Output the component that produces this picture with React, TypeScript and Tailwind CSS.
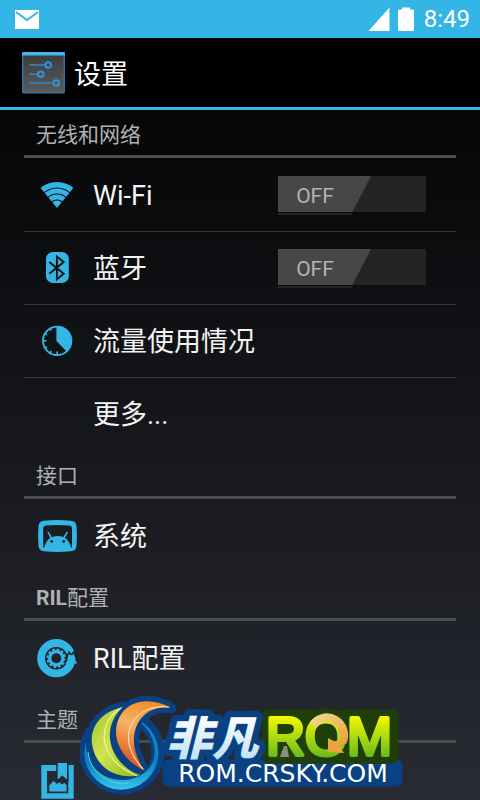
import React, { useState } from 'react';

interface SectionProps {
  title: React.ReactNode;
  first?: boolean;
  children: React.ReactNode;
}

interface RowProps {
  label?: string;
  ariaLabel?: string;
  icon?: React.ReactNode;
  control?: React.ReactNode;
}

const IconBox: React.FC<{ children?: React.ReactNode }> = ({ children }) => (
  <svg className="w-[42px] h-[42px] shrink-0" viewBox="0 1 42 42" fill="#33b5e5" aria-hidden="true">
    {children}
  </svg>
);

const WifiIcon = () => (
  <IconBox>
    <clipPath id="wifi-wedge"><path d="M21 35L-1 8V0H43V8Z" /></clipPath>
    <g clipPath="url(#wifi-wedge)" fill="none" stroke="#33b5e5">
      <circle cx="21" cy="35" r="23.3" strokeWidth="5.6" />
      <circle cx="21" cy="35" r="17" strokeWidth="5" />
      <circle cx="21" cy="35" r="11" strokeWidth="5" />
      <circle cx="21" cy="35" r="7.5" fill="#33b5e5" stroke="none" />
    </g>
  </IconBox>
);

const BluetoothIcon = () => (
  <IconBox>
    <rect x="10" y="6" width="22.8" height="31" rx="7" ry="6.5" />
    <path d="M13.3 16L27.7 27.7L20.9 33.2V10.6L27.7 16L13.3 27.7" fill="none" stroke="#0f1114" strokeWidth="1.9" />
  </IconBox>
);

const DataIcon = () => (
  <IconBox>
    <circle cx="21.2" cy="21.8" r="14.2" fill="none" stroke="#33b5e5" strokeWidth="1.8" />
    <path d="M20.4 7A15 15 0 0 1 31 33L20.4 22Z" />
    <path d="M6.5 21.8h4M21.2 36.5v-4M13.7 34.8l1.6-2.8M8.2 29.3l2.8-1.6M8.2 14.3l2.8 1.6M13.7 8.8l1.6 2.8" stroke="#33b5e5" strokeWidth="1.6" />
  </IconBox>
);

const SystemIcon = () => (
  <IconBox>
    <path
      fillRule="evenodd"
      d="M8 6.8Q21.5 5.2 35 6.8Q40 7.2 40.5 12Q41.4 22 40.5 32Q40 36.8 35 37.2Q21.5 38.8 8 37.2Q3 36.8 2.5 32Q1.6 22 2.5 12Q3 7.2 8 6.8ZM10 11.6Q7.4 11.8 7.2 14.5V33.5H36V14.5Q35.8 11.8 33 11.6Q21.5 10.4 10 11.6Z"
    />
    <path d="M8.3 34C9.5 26 15 22 21.7 22S33.8 26 35 34Z" />
    <path d="M12.2 18.4L15.5 24M31 18.4L27.8 24" stroke="#33b5e5" strokeWidth="1.6" strokeLinecap="round" />
    <circle cx="15.7" cy="27.4" r="1.4" fill="#1b1e23" />
    <circle cx="27.7" cy="27.4" r="1.4" fill="#1b1e23" />
  </IconBox>
);

const RilIcon = () => (
  <IconBox>
    <circle cx="20.3" cy="22.2" r="15.2" fill="none" stroke="#33b5e5" strokeWidth="7.8" />
    <circle cx="20.3" cy="22.2" r="6.6" fill="none" stroke="#33b5e5" strokeWidth="3.2" />
    <circle cx="20.3" cy="22.2" r="8.8" fill="none" stroke="#33b5e5" strokeWidth="2" strokeDasharray="2.8 1.81" />
    <path d="M29.2 25L33 16.2L35.3 19L37.6 16.2L42 26" fill="none" stroke="#1f2228" strokeWidth="1.5" />
    <path d="M35.3 18.5L41.5 27.5H38.5L36 33L29.5 27.5Z" />
  </IconBox>
);

const ThemeIcon = () => (
  <IconBox>
    <path fillRule="evenodd" d="M5.3 7H37.7V40.7H5.3ZM11 13V35.3H32.3V13Z" />
    <path d="M20.2 4H32.5V23.5L26.3 19.5L20.2 23.5Z" fill="#262930" />
    <path d="M21.7 5H31V21.6L26.3 17.5L21.7 21.6Z" />
    <path d="M13.3 33.4V27.5L17.6 23L20.8 26L23.2 24.2L26.2 26.4L28.5 24.8L30.6 27.5V33.4Z" />
  </IconBox>
);

const SettingsIcon = () => (
  <svg className="w-[43px] h-[43px] shrink-0" viewBox="0 0 43 43" fill="none" aria-hidden="true">
    <defs>
      <linearGradient id="panel" x1="0" y1="0" x2="0" y2="1">
        <stop offset="0" stopColor="#3b3b3c" />
        <stop offset="1" stopColor="#5b5b5c" />
      </linearGradient>
    </defs>
    <rect x="0.7" y="1.7" width="41.6" height="40.3" rx="1.2" fill="url(#panel)" stroke="#2e80bd" strokeWidth="1.2" />
    <path d="M0 4.5V2.4Q0 1 1.5 1H41.5Q43 1 43 2.4V4.5Z" fill="#3fb7ea" />
    <path d="M32 14h5M24 23.3h13" stroke="#2b5070" strokeWidth="1.4" />
    <path d="M7 14h16.5M7 23.3h9M7 32h24.5" stroke="#2f86c8" strokeWidth="1.4" />
    <g stroke="#3293d8" strokeWidth="2">
      <circle cx="26.2" cy="14" r="2.8" />
      <circle cx="18.8" cy="23.3" r="2.8" />
      <circle cx="34.2" cy="32" r="2.8" />
    </g>
  </svg>
);

const Switch: React.FC<{ label: string }> = ({ label }) => {
  const [on, setOn] = useState(false);
  return (
    <label className="relative block w-[148px] h-9 mr-[30px] mb-0.5 bg-[#232424] cursor-pointer">
      <input
        type="checkbox"
        className="sr-only"
        aria-label={label}
        checked={on}
        onChange={(e) => setOn(e.target.checked)}
      />
      <span className={`flex h-9 w-[93px] ${on ? 'ml-auto bg-[#33b5e5]' : 'bg-[#464747]'} [clip-path:polygon(0_0,100%_0,80%_100%,0_100%)]`}>
        <span className={`w-[74px] text-center text-[21px] leading-10 ${on ? 'text-white' : 'text-[#b4b4b4]'}`}>{on ? 'ON' : 'OFF'}</span>
      </span>
      <span className="absolute left-0 top-[37px] h-0.5 w-[74px] bg-[#242526]" />
    </label>
  );
};

const Section: React.FC<SectionProps> = ({ title, first, children }) => (
  <section>
    <h2 className={`h-12 px-3 border-b-3 border-[#4b4c50] text-[21px] leading-[51px] font-normal text-[#b0b1b3] ${first ? '' : 'mt-px'}`}>
      {title}
    </h2>
    <ul className="pt-px divide-y divide-[#34363a]">{children}</ul>
  </section>
);

const Row: React.FC<RowProps> = ({ label, ariaLabel, icon, control }) => (
  <li className="flex items-center">
    <button aria-label={ariaLabel} className="flex-1 h-[72px] pl-3 flex items-center gap-[15px] text-left text-[27px] leading-8 text-[#f3f3f3]">
      {icon || <IconBox />}
      <span className="pt-0.5">{label}</span>
    </button>
    {control}
  </li>
);

const StatusBar = () => (
  <div className="h-[38px] shrink-0 bg-[#33b5e5] flex items-center pl-[15px] pr-2.5 text-white">
    <svg className="w-6 h-[19px]" viewBox="0 0 24 19" aria-label="Mail">
      <rect width="24" height="19" fill="#fff" />
      <path d="M1 2L12 10L23 2" fill="none" stroke="#33b5e5" strokeWidth="2" />
    </svg>
    <svg className="ml-auto w-[22px] h-6" viewBox="0 0 22 24" fill="#fff" aria-label="Signal">
      <path d="M0.5 24L21.5 0.5V24Z" />
    </svg>
    <svg className="ml-2 w-4 h-6" viewBox="0 0 16 24" fill="#fff" aria-label="Battery">
      <path d="M4 0.5H12V2.5H14.5Q16 2.5 16 4V22.5Q16 24 14.5 24H1.5Q0 24 0 22.5V4Q0 2.5 1.5 2.5H4Z" />
    </svg>
    <span className="ml-2.5 text-2xl leading-[38px]">8:49</span>
  </div>
);

const RomLogo = () => (
  <svg className="absolute bottom-0 inset-x-0 mx-auto w-[336px] h-[110px] pointer-events-none" viewBox="72 690 336 110">
    <defs>
      <linearGradient id="leaf" x1="0" y1="0" x2="1" y2="1">
        <stop offset="0" stopColor="#9cc62e" />
        <stop offset="0.45" stopColor="#d3e350" />
        <stop offset="1" stopColor="#86b81c" />
      </linearGradient>
      <linearGradient id="flame" x1="0.6" y1="0" x2="0.3" y2="1">
        <stop offset="0" stopColor="#f28a2c" />
        <stop offset="0.4" stopColor="#f9b163" />
        <stop offset="1" stopColor="#d9480f" />
      </linearGradient>
      <linearGradient id="sea" x1="0" y1="0" x2="0" y2="1">
        <stop offset="0" stopColor="#1487c4" />
        <stop offset="0.6" stopColor="#0a82c2" />
        <stop offset="1" stopColor="#35c6ea" />
      </linearGradient>
      <linearGradient id="lime" x1="0" y1="716" x2="0" y2="757" gradientUnits="userSpaceOnUse">
        <stop offset="0" stopColor="#f6f900" />
        <stop offset="1" stopColor="#66bd1c" />
      </linearGradient>
      <linearGradient id="ice" x1="0" y1="716" x2="0" y2="760" gradientUnits="userSpaceOnUse">
        <stop offset="0" stopColor="#ffffff" />
        <stop offset="1" stopColor="#bfe0f8" />
      </linearGradient>
      <linearGradient id="peach" x1="0" y1="0" x2="1" y2="1">
        <stop offset="0" stopColor="#f3d58c" />
        <stop offset="1" stopColor="#eda43a" />
      </linearGradient>
    </defs>

    {/* dark outlines */}
    <g fill="#0a4182" stroke="#0a4182" strokeLinejoin="round">
      <circle cx="122" cy="752" r="36" fill="none" strokeWidth="13" />
      <path d="M123 707C100 712 90 728 92 744C95 766 115 781 141 775C122 770 108 750 110 732C111 722 116 713 123 707Z" strokeWidth="11" />
      <path d="M171 708C152 697 128 699 119 718C110 738 122 760 145 771C134 756 130 738 138 723C145 711 157 706 171 708Z" strokeWidth="11" />
      <rect x="163" y="760" width="239" height="26" rx="6" strokeWidth="1" />
    </g>
    <path d="M269 716H308L313 718Q326 712 340 718L345 716H392V757H269Z" fill="#203f08" stroke="#203f08" strokeWidth="13" strokeLinejoin="round" />
    <path d="M280 757L284 746H287L289 757Z" fill="#87917b" />

    {/* wordmark */}
    <text x="166" y="755" fontFamily="'Noto Sans CJK SC', sans-serif" fontSize="46" fontWeight="900" fontStyle="italic" fill="url(#ice)" stroke="#0a4182" strokeWidth="13" strokeLinejoin="round" paintOrder="stroke">非凡</text>
    <text x="266" y="755" fontFamily="'Liberation Sans', Arial, sans-serif" fontSize="54" fill="url(#lime)" stroke="url(#lime)" strokeWidth="4" strokeLinejoin="round">ROM</text>
    <path d="M313 725A17 17.5 0 0 1 342.5 742" fill="none" stroke="url(#peach)" strokeWidth="8.5" />
    <path d="M328 738L334 741L347 741L340 747L344 753L328 752Z" fill="#eda43a" />
    <text x="283" y="782" textAnchor="middle" fontFamily="'DejaVu Sans', sans-serif" fontSize="25" fill="#fff">ROM.CRSKY.COM</text>

    {/* emblem */}
    <path fillRule="evenodd" fill="url(#sea)" d="M142 722A37 37 0 1 1 86 742C85 765 103 781 124 780C145 779 158 763 154 745C152 736 148 729 142 724Z" />
    <path d="M88 752C90 772 108 786 128 783" fill="none" stroke="#5bd2f0" strokeWidth="1" />
    <path fill="url(#leaf)" d="M123 707C100 712 90 728 92 744C95 766 115 781 141 775C122 770 108 750 110 732C111 722 116 713 123 707Z" />
    <path d="M121 708C96 723 97 759 137 776" fill="none" stroke="#eef5a0" strokeWidth="1.2" />
    <path fill="url(#flame)" d="M171 708C152 697 128 699 119 718C110 738 122 760 145 771C134 756 130 738 138 723C145 711 157 706 171 708Z" />
    <path d="M169 707C135 703 112 735 143 769" fill="none" stroke="#fcd9a6" strokeWidth="1.2" />
  </svg>
);

const App: React.FC = () => {
  return (
    <div className="relative h-screen flex flex-col overflow-hidden bg-linear-to-b/srgb from-black to-[#282b33] font-['Roboto','Noto_Sans_CJK_SC',sans-serif]">
      <StatusBar />
      <header className="h-[72px] shrink-0 flex items-center gap-[9px] px-[22px] border-b-3 border-[#33b5e5] bg-black">
        <SettingsIcon />
        <h1 className="pt-1 text-[27px] leading-8 font-normal text-white">设置</h1>
      </header>

      <main className="flex-1 min-h-0 px-6 overflow-y-auto [scrollbar-width:none]">
        <Section title="无线和网络" first>
          <Row label="Wi-Fi" icon={<WifiIcon />} control={<Switch label="Wi-Fi" />} />
          <Row label="蓝牙" icon={<BluetoothIcon />} control={<Switch label="蓝牙" />} />
          <Row label="流量使用情况" icon={<DataIcon />} />
          <Row label="更多..." />
        </Section>
        <Section title="接口">
          <Row label="系统" icon={<SystemIcon />} />
        </Section>
        <Section title={<><span className="font-bold">RIL</span>配置</>}>
          <Row label="RIL配置" icon={<RilIcon />} />
        </Section>
        <Section title="主题">
          <Row ariaLabel="主题" icon={<ThemeIcon />} />
        </Section>
      </main>

      <RomLogo />
    </div>
  );
};

export default App;
